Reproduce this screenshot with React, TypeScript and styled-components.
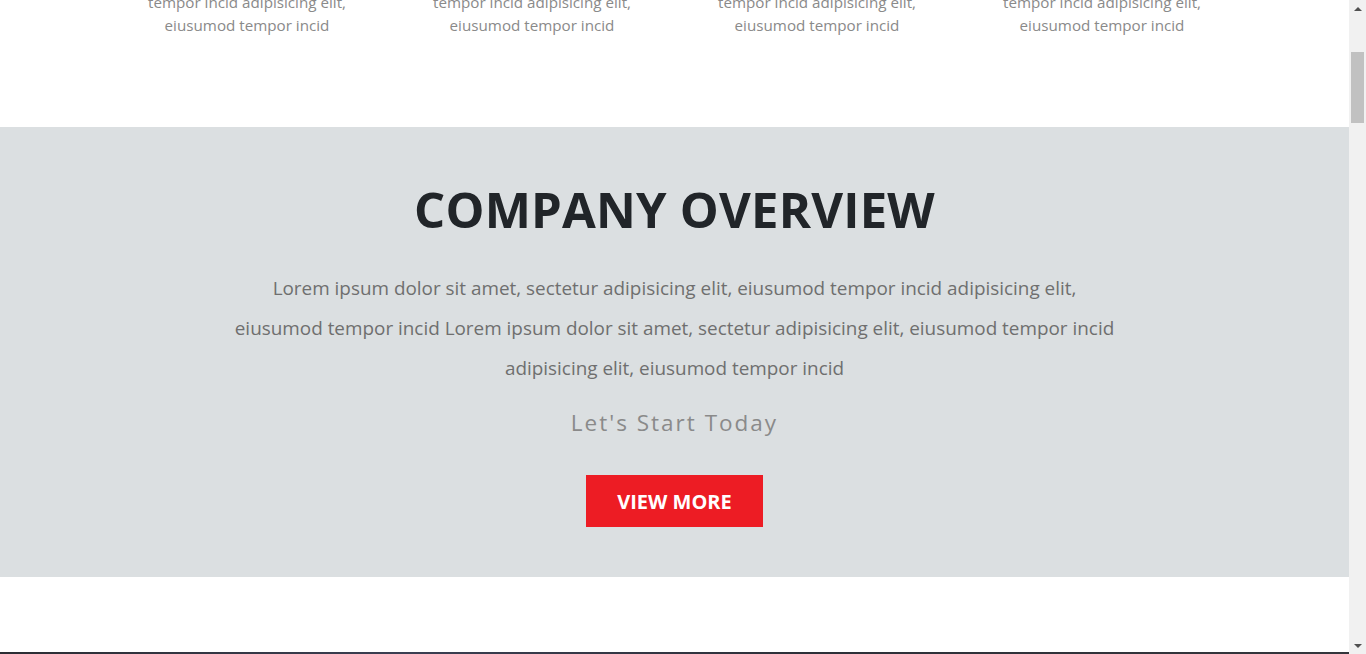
import React from "react";
import styled, {createGlobalStyle} from "styled-components";

const GlobalStyle = createGlobalStyle`
  html, body {
    margin: 0;
    padding: 0;
    height: 654px;
    overflow: hidden;
    background: #fff;
    font-family: "Open Sans", "Noto Sans", Arial, sans-serif;
  }
`;

const Page = styled.div`
  display: flex;
  height: 654px;
  overflow: hidden;
`;

const Main = styled.div`
  flex: 1;
  overflow: hidden;
`;

const Container = styled.div`
  width: 1140px;
  margin: 0 auto;
`;

const FeatureRow = styled.div`
  display: grid;
  grid-template-columns: repeat(4, 1fr);
  margin-top: -9px;
  padding-bottom: 90px;
`;

const FeatureText = styled.p`
  margin: 0;
  padding: 0 15px;
  text-align: center;
  font-size: 15.2px;
  line-height: 23px;
  color: #8a8a8a;
`;

const Overview = styled.section`
  background: #dbdfe1;
  padding: 50px 0 50px;
  text-align: center;
`;

const Title = styled.h2`
  margin: 0 0 27px;
  font-size: 49px;
  line-height: 64px;
  font-weight: 700;
  color: #212529;
  letter-spacing: 0.2px;
`;

const Lead = styled.p`
  margin: 0 auto;
  max-width: 890px;
  font-size: 18.9px;
  line-height: 40px;
  color: #6f6f6f;
`;

const Tagline = styled.h4`
  margin: 20px 0 37px;
  font-size: 22.5px;
  line-height: 30px;
  font-weight: 400;
  letter-spacing: 2px;
  color: #8a8a8a;
`;

const RedButton = styled.a`
  display: inline-flex;
  align-items: center;
  justify-content: center;
  width: 177px;
  height: 52px;
  background: #ed1c24;
  color: #fff;
  font-size: 20px;
  font-weight: 700;
  text-decoration: none;
`;

const Spacer = styled.div`
  height: 75px;
  background: #fff;
`;

const DarkBand = styled.div`
  height: 120px;
  background: linear-gradient(90deg, #2b2d33, #3b3f52 30%, #2d3038 60%, #34363c);
`;

const ScrollBar = styled.div`
  width: 17px;
  background: #f1f1f1;
  display: flex;
  flex-direction: column;
  align-items: center;
`;

const Arrow = styled.div<{ $down?: boolean }>`
  height: 17px;
  width: 17px;
  display: flex;
  align-items: center;
  justify-content: center;
  &::before {
    content: "";
    border-left: 4px solid transparent;
    border-right: 4px solid transparent;
    ${p => p.$down ? "border-top: 4px solid #505050;" : "border-bottom: 4px solid #505050;"}
  }
`;

const Track = styled.div`
  flex: 1;
  width: 100%;
  display: flex;
  justify-content: center;
`;

const Thumb = styled.div`
  margin-top: 35px;
  width: 13px;
  height: 71px;
  background: #c1c1c1;
`;

const features = [1, 2, 3, 4];

const App = () => {
    return (
        <Page>
            <GlobalStyle/>
            <Main>
                <Container>
                    <FeatureRow>
                        {features.map(i => (
                            <FeatureText key={i}>
                                tempor incid adipisicing elit,<br/>eiusumod tempor incid
                            </FeatureText>
                        ))}
                    </FeatureRow>
                </Container>
                <Overview>
                    <Container>
                        <Title>COMPANY OVERVIEW</Title>
                        <Lead>
                            Lorem ipsum dolor sit amet, sectetur adipisicing elit, eiusumod tempor incid adipisicing elit,
                            eiusumod tempor incid Lorem ipsum dolor sit amet, sectetur adipisicing elit, eiusumod tempor incid
                            adipisicing elit, eiusumod tempor incid
                        </Lead>
                        <Tagline>Let's Start Today</Tagline>
                        <RedButton href="#">VIEW MORE</RedButton>
                    </Container>
                </Overview>
                <Spacer/>
                <DarkBand/>
            </Main>
            <ScrollBar>
                <Arrow/>
                <Track><Thumb/></Track>
                <Arrow $down/>
            </ScrollBar>
        </Page>
    );
};

export default App;
